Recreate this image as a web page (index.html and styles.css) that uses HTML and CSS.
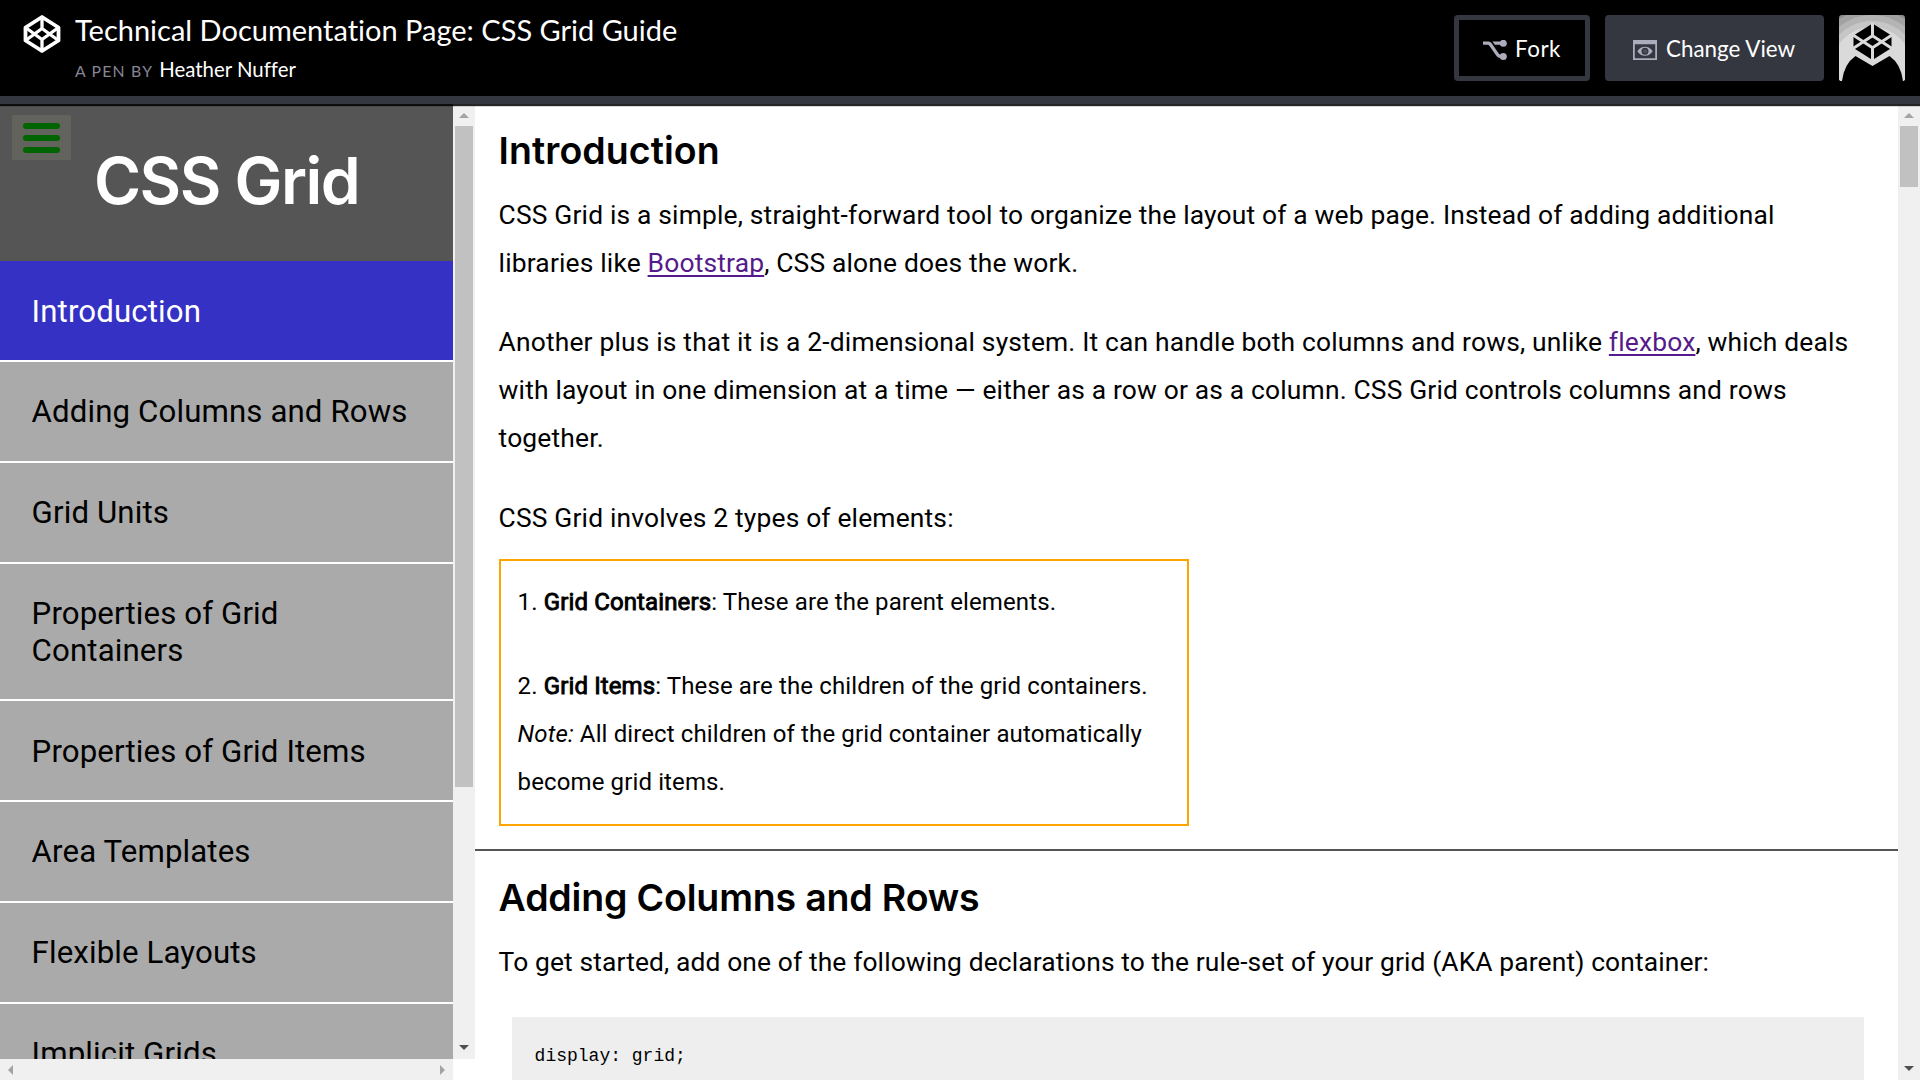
FILE: index.html
```html
<!DOCTYPE html>
<html lang="en">
<head>
<meta charset="utf-8">
<title>Technical Documentation Page: CSS Grid Guide</title>
<link rel="stylesheet" href="styles.css">
</head>
<body>
<header class="topbar">
  <svg class="logo" width="40" height="40" viewBox="0 0 40 40" fill="none" stroke="#fff" stroke-width="3.8" stroke-linejoin="round">
    <path d="M20 3 36.500 13.500V26.500L20 37 3.500 26.500V13.500Z"/>
    <path d="M20 3V14M20 26V37M36.500 13.500 20 25.500 3.500 13.500M3.500 26.500 20 14.500 36.500 26.500" stroke-width="3.300"/>
  </svg>
  <div class="pen">
    <h1 class="pen-title">Technical Documentation Page: CSS Grid Guide</h1>
    <div class="pen-by"><span class="by">A PEN BY</span><a class="author">Heather Nuffer</a></div>
  </div>
  <div class="actions">
    <button class="btn btn-fork">
      <svg width="24" height="20" viewBox="0 0 24 20" fill="#abacbc">
        <path d="M0 1.500H5.500Q7.500 1.500 8.700 3.200L15.500 13.200Q16.500 14.700 19 14.800V18.200Q15 18.300 12.800 15L6.500 5.900Q5.800 4.800 4.500 4.800H0Z"/>
        <path d="M9.500 1.500H19V4.800H11.800Z"/>
        <circle cx="20.300" cy="3.300" r="3.500"/><circle cx="20.300" cy="16.500" r="3.500"/>
      </svg>
      <span>Fork</span>
    </button>
    <button class="btn btn-view">
      <svg width="24" height="20" viewBox="0 0 24 20">
        <path fill="#abacbc" fill-rule="evenodd" d="M0 0H24V20H0ZM1.800 4.300V18.200H22.200V4.300Z"/>
        <path fill="#abacbc" fill-rule="evenodd" d="M4.300 11.200Q7.500 6.800 12 6.800T19.700 11.200Q16.500 15.700 12 15.700T4.300 11.200ZM12 7.700A3.500 3.500 0 0 0 12 14.700 3.500 3.500 0 0 0 12 7.700Z"/>
        <circle cx="12.200" cy="11.200" r="2" fill="#4c4f59"/>
      </svg>
      <span>Change View</span>
    </button>
    <svg class="avatar" width="66" height="66" viewBox="0 0 66 66">
      <rect width="66" height="66" fill="#8c8c8c"/>
      <circle cx="33" cy="52" r="58" fill="#a2a2a2"/>
      <circle cx="33" cy="52" r="52" fill="#b4b4b4"/>
      <circle cx="33" cy="52" r="46" fill="#c6c6c6"/>
      <circle cx="33" cy="52" r="40" fill="#dadada"/>
      <path d="M3 66Q5 49 16.500 41L33.500 51 50.500 41Q62 49 64 66Z"/>
      <path d="M33.500 8.500 52.500 20.500V33L33.500 45 14.500 33V20.500Z"/>
      <path d="M33.500 8V21M33.500 33V46M53 20 33.500 32.800 14 20M14 33.500 33.500 20.700 53 33.500" fill="none" stroke="#dadada" stroke-width="3"/>
    </svg>
  </div>
</header>
<div class="frame">
  <div class="side">
    <div class="side-scroll">
      <nav class="nav">
        <div class="nav-head">
          <div class="nav-title">CSS Grid</div>
          <div class="burger"><i></i><i></i><i></i></div>
        </div>
        <a class="nav-link active">Introduction</a>
        <a class="nav-link">Adding Columns and Rows</a>
        <a class="nav-link">Grid Units</a>
        <a class="nav-link">Properties of Grid Containers</a>
        <a class="nav-link">Properties of Grid Items</a>
        <a class="nav-link">Area Templates</a>
        <a class="nav-link">Flexible Layouts</a>
        <a class="nav-link">Implicit Grids</a>
      </nav>
      <div class="vbar">
        <svg width="10" height="5" viewBox="0 0 10 5" fill="#a3a3a3"><path d="M5 0 10 5H0Z"/></svg>
        <div class="thumb thumb-side"></div>
        <svg class="down" width="10" height="5" viewBox="0 0 10 5" fill="#505050"><path d="M0 0H10L5 5Z"/></svg>
      </div>
    </div>
    <div class="hbar">
      <svg width="5" height="10" viewBox="0 0 5 10" fill="#a3a3a3"><path d="M5 0V10L0 5Z"/></svg>
      <svg width="5" height="10" viewBox="0 0 5 10" fill="#a3a3a3"><path d="M0 0 5 5 0 10Z"/></svg>
    </div>
  </div>
  <main class="doc">
    <section class="section">
      <h2 class="heading h-intro">Introduction</h2>
      <p class="para">CSS Grid is a simple, straight-forward tool to organize the layout of a web page. Instead of adding additional<br>libraries like <a class="link">Bootstrap</a>, CSS alone does the work.</p>
      <p class="para">Another plus is that it is a 2-dimensional system. It can handle both columns and rows, unlike <a class="link">flexbox</a>, which deals<br>with layout in one dimension at a time — either as a row or as a column. CSS Grid controls columns and rows<br>together.</p>
      <p class="para p-types">CSS Grid involves 2 types of elements:</p>
      <div class="box">
        <div>1. <b class="strong">Grid Containers</b>: These are the parent elements.</div>
        <div>2. <b class="strong">Grid Items</b>: These are the children of the grid containers.<br><em>Note:</em> All direct children of the grid container automatically<br>become grid items.</div>
      </div>
    </section>
    <section class="section">
      <h2 class="heading h-adding">Adding Columns and Rows</h2>
      <p class="para p-start">To get started, add one of the following declarations to the rule-set of your grid (AKA parent) container:</p>
      <pre class="code">display: grid;</pre>
    </section>
  </main>
  <div class="vbar">
    <svg width="10" height="5" viewBox="0 0 10 5" fill="#a3a3a3"><path d="M5 0 10 5H0Z"/></svg>
    <div class="thumb thumb-doc"></div>
    <svg class="down" width="10" height="5" viewBox="0 0 10 5" fill="#505050"><path d="M0 0H10L5 5Z"/></svg>
  </div>
</div>
</body>
</html>
```
FILE: styles.css
```css
* { box-sizing: border-box; margin: 0; padding: 0; }
body {
  height: 1080px;
  overflow: hidden;
  display: flex;
  flex-direction: column;
  background: #fff;
  color: #000;
  font-family: Roboto, sans-serif;
}

.topbar {
  flex: none;
  height: 104px;
  display: flex;
  align-items: flex-start;
  padding: 15px 15px 0 22px;
  background: #000;
  border-bottom: 8px solid #343740;
  box-shadow: 0 1px 1px 1px rgba(0, 0, 0, .85);
  position: relative;
  z-index: 1;
  font-family: Lato, sans-serif;
  font-variant-ligatures: none;
  color: #fff;
}
.logo { flex: none; margin: -1px 0 0 -.5px; }
.pen { margin-left: 13.5px; }
.pen-title { font-size: 29px; line-height: 34px; font-weight: 400; margin-top: -2px; white-space: nowrap; }
.pen-by { display: flex; align-items: baseline; gap: 6px; margin-top: 9px; line-height: 26px; }
.by { font-size: 15.8px; letter-spacing: 1.2px; color: #868694; }
.author { font-size: 20.4px; }
.actions { display: flex; gap: 15px; margin-left: auto; }
.btn {
  height: 66px;
  display: flex;
  align-items: center;
  gap: 8px;
  border: 5px solid #343740;
  border-radius: 4px;
  background: #000;
  color: #fff;
  font: 22.4px/28px Lato, sans-serif;
}
.btn svg { display: block; margin-top: 4px; }
.btn span { padding-top: 2px; }
.btn-fork { width: 136px; padding-left: 24px; }
.btn-fork span { letter-spacing: .5px; }
.btn-view { width: 219px; padding-left: 23px; gap: 9px; background: #343740; }
.avatar { display: block; border-radius: 3px; }

.frame { flex: 1; min-height: 0; display: flex; }
.side { width: 475px; display: flex; flex-direction: column; }
.side-scroll { height: 955px; display: flex; overflow: hidden; }
.nav { width: 453px; display: flex; flex-direction: column; background: #fff; }
.nav-head {
  flex: none;
  height: 157.2px;
  padding-top: 45px;
  position: relative;
  background: #555;
  color: #fff;
  text-align: center;
}
.nav-title { font: 600 64px/64px Inter, sans-serif; letter-spacing: -1.5px; }
.burger {
  position: absolute;
  left: 12px;
  top: 11px;
  width: 59px;
  height: 45px;
  padding: 8px 11px 0;
  display: flex;
  flex-direction: column;
  gap: 6px;
  background: #63635d;
}
.burger i { height: 6px; border-radius: 3px; background: #006400; }
.nav-link {
  flex: none;
  padding: 31.4px 31px 30.4px 31.6px;
  border-bottom: 2px solid #fff;
  background: #aaa;
  font-size: 31.2px;
  line-height: 37px;
  letter-spacing: .13px;
}
.nav-link.active { background: #3531c4; color: #fff; }

.vbar {
  flex: none;
  width: 22px;
  padding: 9px 0;
  display: flex;
  flex-direction: column;
  align-items: center;
  background: #f0f0f0;
}
.vbar svg { flex: none; display: block; }
.vbar .down { margin-top: auto; }
.thumb { width: 18px; margin-top: 8px; background: #c1c1c1; }
.thumb-side { height: 661px; }
.thumb-doc { height: 61px; }
.hbar {
  width: 453px;
  height: 21px;
  padding: 0 8px;
  display: flex;
  align-items: center;
  justify-content: space-between;
  background: #f0f0f0;
}

.doc { flex: 1; min-width: 0; overflow: hidden; }
.section { padding: 23px 24px 23px 23.6px; border-bottom: 2px solid #555; }
.heading { font: 600 37.5px/48px Inter, sans-serif; margin-bottom: 16px; }
.h-intro { letter-spacing: .05px; }
.h-adding { letter-spacing: -.17px; }
.para { font-size: 26.4px; line-height: 48px; letter-spacing: .17px; white-space: nowrap; }
.para + .para { margin-top: 31px; }
.para + .p-types { margin-top: 32px; }
.p-start { letter-spacing: .12px; }
.link { color: #551a8b; text-decoration: underline; text-decoration-thickness: 2px; text-underline-offset: 3px; text-decoration-skip-ink: none; }
.box {
  width: 690px;
  margin-top: 17px;
  padding: 17px 17px 18px;
  display: flex;
  flex-direction: column;
  gap: 36px;
  border: 2px solid #ffa500;
  font-size: 24px;
  line-height: 48px;
  letter-spacing: .12px;
  white-space: nowrap;
}
.strong { font-weight: 400; -webkit-text-stroke: .9px #000; }
.code {
  margin: 31px 10px 0 13.4px;
  padding: 27px 22.6px;
  height: 120px;
  background: #eee;
  font: 18px/24px "Liberation Mono", monospace;
}
```
